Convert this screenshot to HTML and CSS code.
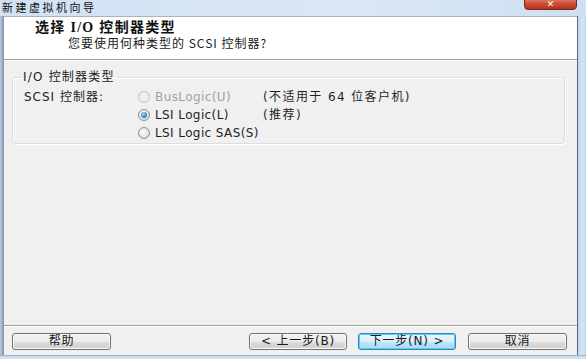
FILE: index.html
```html
<!DOCTYPE html>
<html lang="zh">
<head>
<meta charset="utf-8">
<title>新建虚拟机向导</title>
<link rel="stylesheet" href="styles.css">
</head>
<body>
<div class="window">
  <div class="titlebar">
    <span class="title">新建虚拟机向导</span>
    <div class="close"><span>✕</span></div>
  </div>
  <div class="frame">
    <div class="edge-left"></div>
    <div class="content">
      <div class="header">
        <div class="h-title">选择 I/O 控制器类型</div>
        <div class="h-sub">您要使用何种类型的 SCSI 控制器?</div>
      </div>
      <div class="main">
        <fieldset class="group">
          <legend>I/O 控制器类型</legend>
          <div class="grid">
            <div class="lbl">SCSI 控制器:</div>
            <div class="opt disabled"><span class="radio"></span>BusLogic(U)</div>
            <div class="note">(不适用于 64 位客户机)</div>
            <div></div>
            <div class="opt"><span class="radio on"></span>LSI Logic(L)</div>
            <div class="note">(推荐)</div>
            <div></div>
            <div class="opt"><span class="radio"></span>LSI Logic SAS(S)</div>
            <div></div>
          </div>
        </fieldset>
      </div>
      <div class="buttons">
        <button class="btn w-help">帮助</button>
        <div class="spacer"></div>
        <button class="btn w-back">&lt; 上一步(B)</button>
        <button class="btn w-next default">下一步(N) &gt;</button>
        <button class="btn w-cancel">取消</button>
      </div>
    </div>
    <div class="edge-right"></div>
  </div>
  <div class="edge-bottom"></div>
</div>
</body>
</html>
```
FILE: styles.css
```css
* { box-sizing: border-box; }
html, body { margin: 0; padding: 0; }
body {
  width: 586px; height: 359px; overflow: hidden;
  font-family: "DejaVu Sans", "Noto Sans CJK SC", sans-serif;
  font-size: 12px; color: #1e1e1e;
  background: #c9dcf0;
}
.window { width: 586px; height: 359px; display: flex; flex-direction: column; }
.titlebar {
  height: 16px; flex: none; display: flex; align-items: flex-start;
  background: linear-gradient(to right, #d2e2f3, #dae7f5 60%, #cfe0f2);
  overflow: hidden; position: relative;
}
.title {
  font-family: "Noto Sans CJK SC", sans-serif; font-size: 11px;
  line-height: 13px; padding: 1px 0 0 2px;
  color: #101010; letter-spacing: 2.5px;
}
.close {
  position: absolute; left: 524px; top: -4px; width: 53px; height: 14px;
  border: 1px solid #6e2a20; border-radius: 0 0 4px 4px;
  background: linear-gradient(to bottom, #e79a86, #d0523a 50%, #b6301c);
  display: flex; justify-content: center; align-items: flex-end;
  color: #fff; font-size: 9px; line-height: 9px; font-weight: bold;
}
.frame { flex: 1; display: flex; min-height: 0; }
.edge-left { width: 3px; flex: none; background: linear-gradient(to right, #b7cde4, #8ea3b8); }
.edge-right {
  width: 9px; flex: none;
  background: linear-gradient(to right, #5e6a76 0, #5e6a76 1px, #bfd6ee 1px, #d4e5f6 60%, #c3d9ef);
}
.edge-bottom { height: 4px; flex: none; background: linear-gradient(to bottom, #8ea3b8, #c9ddf1 40%, #d9e7f5); }
.content { flex: 1; display: flex; flex-direction: column; background: #f0f0f0; border-left: 1px solid #8c99a6; }
.header {
  height: 44px; flex: none; background: #fff;
  border-top: 1px solid #a9b4bf; border-bottom: 1px solid #a0a0a0;
  box-shadow: 0 1px 0 #fff;
  padding: 3px 0 0 31px;
  font-family: "Noto Sans CJK SC", "DejaVu Sans", sans-serif;
}
.h-title {
  font-family: "Liberation Serif", "Noto Sans CJK SC", serif; font-size: 14px;
  font-weight: bold; line-height: 15px; letter-spacing: 1.3px; color: #111;
}
.h-sub { padding-left: 33px; font-size: 12px; line-height: 15px; letter-spacing: 1px; color: #222; }
.main { flex: 1; padding: 10px 12px 0 8px; border-bottom: 1px solid #a0a0a0; }
.group {
  margin: 0; padding: 5px 0 2px 0; border: 1px solid #d5dfe5; border-radius: 3px;
  box-shadow: inset 1px 1px 0 #fff, 1px 1px 0 #fff;
}
.group legend {
  padding: 0 2px; margin-left: 8px; line-height: 14px; color: #222;
  font-family: "DejaVu Sans", "Noto Sans CJK SC", sans-serif; letter-spacing: 1.2px;
}
.grid { display: grid; grid-template-columns: 114px 125px 1fr; row-gap: 2px; padding-left: 11px; }
.grid > div { line-height: 15px; height: 16px; display: flex; align-items: center; white-space: nowrap; }
.lbl { letter-spacing: 1px; }
.note { letter-spacing: 1.4px; }
.opt { gap: 5px; letter-spacing: 0.4px; }
.opt.disabled { color: #a0a0a0; }
.radio {
  width: 12px; height: 12px; border-radius: 50%; flex: none;
  border: 1px solid #8f8f8f;
  background: radial-gradient(circle at 40% 40%, #ffffff, #dcdcdc 70%, #c8c8c8);
  position: relative;
}
.disabled .radio { border-color: #c4c4c4; background: radial-gradient(circle, #f4f4f4, #e6e6e6); }
.radio.on::after {
  content: ""; position: absolute; left: 2px; top: 2px; width: 6px; height: 6px; border-radius: 50%;
  background: radial-gradient(circle at 40% 35%, #9fdcff, #2a8ad4 60%, #165a9c);
}
.buttons { height: 29px; flex: none; display: flex; align-items: center; padding: 0 10px 0 8px; gap: 12px; border-top: 1px solid #fff; }
.spacer { flex: 1; }
.btn {
  height: 17px; padding: 0; margin: 0;
  font-family: "DejaVu Sans", "Noto Sans CJK SC", sans-serif; font-size: 12px; line-height: 15px; color: #1a1a1a;
  letter-spacing: 0.8px;
  border: 1px solid #707070; border-radius: 3px;
  background: linear-gradient(to bottom, #f2f2f2 0, #ebebeb 50%, #dddddd 51%, #cfcfcf 100%);
  box-shadow: inset 0 0 0 1px #fbfbfb;
}
.w-help { width: 99px; }
.w-back { width: 98px; }
.w-next { width: 98px; margin-left: -1px; }
.w-cancel { width: 99px; }
.btn.default {
  border-color: #3c7fb1;
  background: linear-gradient(to bottom, #eaf6fd 0, #d9f0fc 50%, #bee6fd 51%, #a7d9f5 100%);
  box-shadow: inset 0 0 0 1px #48d5fb;
}
```
